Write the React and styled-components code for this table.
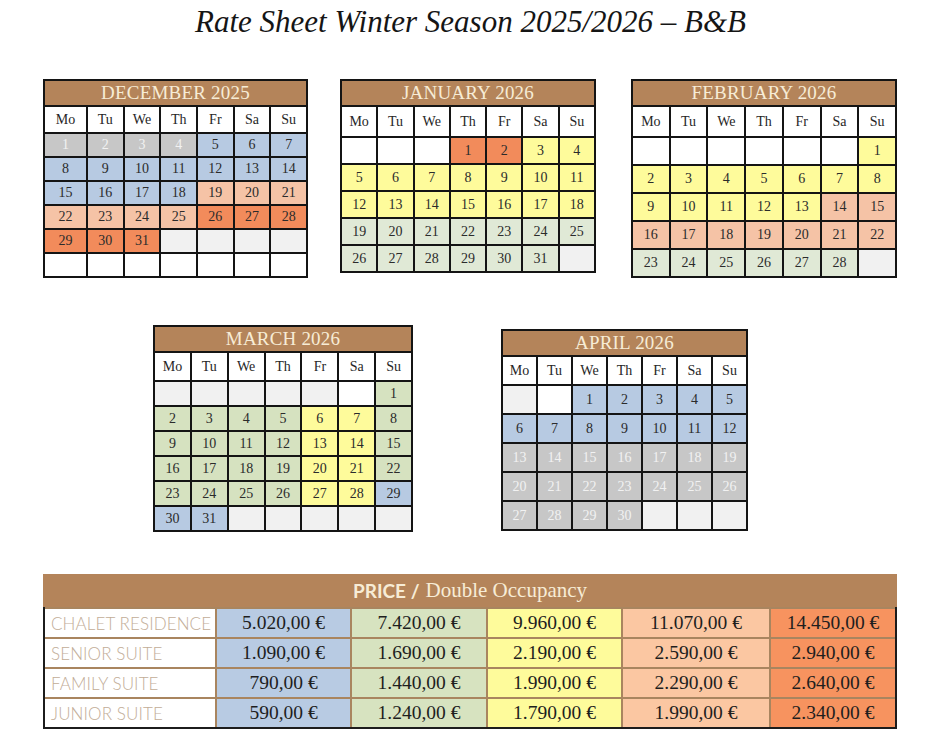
import React from "react";
import styled, { createGlobalStyle } from "styled-components";

///////////////////////////////////

const Global = createGlobalStyle`
  body {
    margin: 0;
    background: #ffffff;
  }
`;

const COLORS = {
  w: "#ffffff",
  e: "#f1f1f1",
  gray: "#c7c7c7",
  blue: "#b7cae2",
  peach: "#f5c3a6",
  orange: "#f28b5b",
  yellow: "#fefb9b",
  green: "#e0e9d6",
  olive: "#d6e2c0",
};

const Page = styled.div`
  width: 941px;
  height: 749px;
  overflow: hidden;
  display: flex;
  flex-direction: column;
  font-family: "Liberation Serif", "Times New Roman", serif;
`;

const Title = styled.h1`
  margin: 0;
  padding-top: 3px;
  height: 76px;
  text-align: center;
  font-style: italic;
  font-weight: normal;
  font-size: 31px;
  line-height: 37px;
  color: #151515;
`;

const Row = styled.div`
  display: flex;
  align-items: flex-start;
  padding-left: ${(p) => p.$left}px;
  margin-top: ${(p) => p.$top || 0}px;
  gap: ${(p) => p.$gap}px;
`;

const Calendar = styled.div`
  width: ${(p) => p.$width}px;
  margin-top: ${(p) => p.$shift || 0}px;
  margin-right: ${(p) => p.$after || 0}px;
  display: grid;
  grid-template-columns: ${(p) => p.$cols || "repeat(7, 1fr)"};
  grid-template-rows: 24px ${(p) => p.$dow}px;
  grid-auto-rows: ${(p) => p.$row}px;
  gap: 2px;
  border: 2px solid #141414;
  background: #141414;
  box-sizing: border-box;
`;

const MonthHeader = styled.div`
  grid-column: 1 / -1;
  background: #b4845a;
  color: #f7ecd6;
  font-size: 19px;
  display: flex;
  align-items: center;
  justify-content: center;
  letter-spacing: 0.2px;
`;

const DowCell = styled.div`
  background: #ffffff;
  color: #262626;
  font-size: 14px;
  display: flex;
  align-items: center;
  justify-content: center;
`;

const DayCell = styled.div`
  background: ${(p) => COLORS[p.$tone]};
  color: ${(p) => (p.$tone === "gray" ? "#f2f2f2" : "#2b2b2b")};
  font-size: 14px;
  display: flex;
  align-items: center;
  justify-content: center;
`;

const PriceTable = styled.div`
  margin: 42px 0 0 43px;
  width: 854px;
  display: grid;
  grid-template-columns: 170px 133px 134px 133px 146px 1fr;
  grid-template-rows: 33px;
  grid-auto-rows: 28px;
  gap: 2px;
  background: #a9855f;
  border: 2px solid #1c1c1c;
  border-top: none;
  box-sizing: border-box;
`;

const PriceHeader = styled.div`
  grid-column: 1 / -1;
  margin: 0 -2px;
  background: #b4845a;
  color: #f7ecd6;
  display: flex;
  align-items: center;
  justify-content: center;
  font-size: 21px;
  gap: 6px;
`;

const PriceLabel = styled.b`
  font-family: Lato, "Liberation Sans", sans-serif;
  font-weight: 700;
  font-size: 19px;
`;

const RoomCell = styled.div`
  background: #ffffff;
  color: #c2ad97;
  font-family: Lato, "Liberation Sans", sans-serif;
  font-weight: 300;
  font-size: 17px;
  letter-spacing: 0.1px;
  display: flex;
  align-items: center;
  padding-left: 6px;
`;

const PriceCell = styled.div`
  background: ${(p) => p.$bg};
  color: #1e1e1e;
  font-size: 19.5px;
  display: flex;
  align-items: center;
  justify-content: center;
`;

///////////////////////////////////

const DOW = ["Mo", "Tu", "We", "Th", "Fr", "Sa", "Su"];

// builds the cell list: leading blanks, days with their tone, trailing blanks
const build = (lead, days, toneOf, tail) => [
  ...lead.map((t) => ({ tone: t })),
  ...Array.from({ length: days }, (_, i) => ({ day: i + 1, tone: toneOf(i + 1) })),
  ...tail.map((t) => ({ tone: t })),
];

const MONTHS = {
  dec: {
    name: "DECEMBER 2025",
    cells: build(
      [],
      31,
      (d) => (d <= 4 ? "gray" : d <= 18 ? "blue" : d <= 25 ? "peach" : "orange"),
      ["e", "e", "e", "e", "w", "w", "w", "w", "w", "w", "w"]
    ),
  },
  jan: {
    name: "JANUARY 2026",
    cells: build(
      ["w", "w", "w"],
      31,
      (d) => (d <= 2 ? "orange" : d <= 18 ? "yellow" : "green"),
      ["e"]
    ),
  },
  feb: {
    name: "FEBRUARY 2026",
    cells: build(
      ["w", "w", "w", "w", "w", "w"],
      28,
      (d) => (d <= 13 ? "yellow" : d <= 22 ? "peach" : "green"),
      ["e"]
    ),
  },
  mar: {
    name: "MARCH 2026",
    cells: build(
      ["e", "e", "e", "e", "e", "w"],
      31,
      (d) => (d >= 29 ? "blue" : d % 7 === 6 || d % 7 === 0 ? "yellow" : "olive"),
      ["e", "e", "e", "e", "e"]
    ),
  },
  apr: {
    name: "APRIL 2026",
    cells: build(
      ["e", "w"],
      30,
      (d) => (d <= 12 ? "blue" : "gray"),
      ["e", "e", "e"]
    ),
  },
};

const Month = ({ month, ...rest }) => (
  <Calendar {...rest}>
    <MonthHeader>{month.name}</MonthHeader>
    {DOW.map((d) => (
      <DowCell key={d}>{d}</DowCell>
    ))}
    {month.cells.map((c, i) => (
      <DayCell key={i} $tone={c.tone}>
        {c.day}
      </DayCell>
    ))}
  </Calendar>
);

const TONES = ["#b8cbe3", "#d7e3c0", "#fefb9b", "#fbc7a2", "#f7935f"];

const ROOMS = [
  ["CHALET RESIDENCE", ["5.020,00", "7.420,00", "9.960,00", "11.070,00", "14.450,00"]],
  ["SENIOR SUITE", ["1.090,00", "1.690,00", "2.190,00", "2.590,00", "2.940,00"]],
  ["FAMILY SUITE", ["790,00", "1.440,00", "1.990,00", "2.290,00", "2.640,00"]],
  ["JUNIOR SUITE", ["590,00", "1.240,00", "1.790,00", "1.990,00", "2.340,00"]],
];

const App = () => {

  return (

    <Page>

      <Global />

      <Title>Rate Sheet Winter Season 2025/2026 – B&amp;B</Title>

      <Row $left={43} $gap={0}>
        <Month month={MONTHS.dec} $width={265} $after={32} $cols="41px repeat(6, 1fr)" $dow={25} $row={22} />
        <Month month={MONTHS.jan} $width={256} $after={35} $dow={29} $row={25} />
        <Month month={MONTHS.feb} $width={266} $dow={29} $row={26} />
      </Row>

      <Row $left={153} $gap={88} $top={47}>
        <Month month={MONTHS.mar} $width={260} $dow={27} $row={23} />
        <Month month={MONTHS.apr} $width={247} $shift={4} $dow={27} $row={27} />
      </Row>

      <PriceTable>

        <PriceHeader>
          <PriceLabel>PRICE /</PriceLabel> Double Occupancy
        </PriceHeader>

        {ROOMS.map(([room, prices]) => (
          <React.Fragment key={room}>
            <RoomCell>{room}</RoomCell>
            {prices.map((p, i) => (
              <PriceCell key={i} $bg={TONES[i]}>
                {p} €
              </PriceCell>
            ))}
          </React.Fragment>
        ))}

      </PriceTable>

    </Page>

  );

};

export default App;
